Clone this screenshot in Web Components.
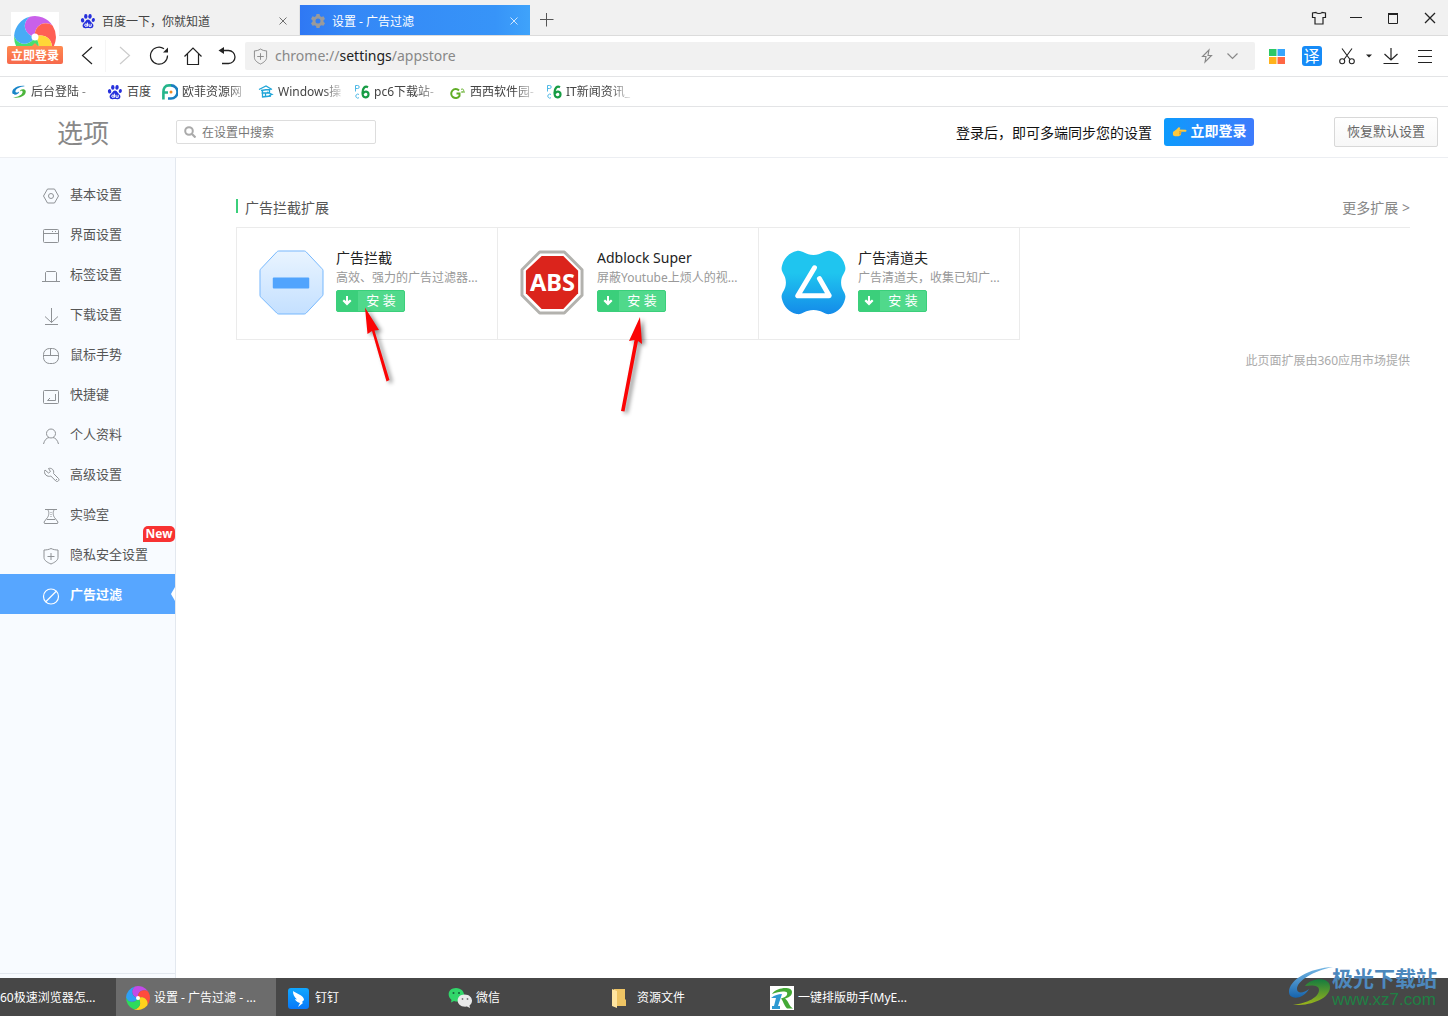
<!DOCTYPE html>
<html lang="zh-CN">
<head>
<meta charset="utf-8">
<title>设置 - 广告过滤</title>
<style>
html,body{margin:0;height:100%}
body{font-family:"Noto Sans","Noto Sans CJK SC",sans-serif;font-size:12px;color:#333;background:#fff}
</style>
</head>
<body>
<browser-window></browser-window>
<script>
const petal='M0 0C-6-1-8-8-3-11.6A12 12 0 0 1 10.1-6.4C5.1-10.1-.9-6 0 0Z';
const wheel=`<g transform="translate(12 12)"><path d="${petal}" fill="#c24be8"/><path d="${petal}" fill="#ff4a3d" transform="rotate(72)"/><path d="${petal}" fill="#ffd21c" transform="rotate(144)"/><path d="${petal}" fill="#2edb5c" transform="rotate(216)"/><path d="${petal}" fill="#2fa0f5" transform="rotate(288)"/><circle r="2" fill="#fff"/></g>`;
const paw='<g fill="#2630dc"><ellipse cx="2.6" cy="7.3" rx="1.7" ry="2.2" transform="rotate(-12 2.6 7.3)"/><ellipse cx="5.8" cy="3.4" rx="1.7" ry="2.3"/><ellipse cx="10" cy="3.4" rx="1.7" ry="2.3" transform="rotate(8 10 3.4)"/><ellipse cx="13.3" cy="7" rx="1.6" ry="2.1" transform="rotate(12 13.3 7)"/><path d="M8 6.6c1.5 0 2.2 1.3 3.3 2.6 1.2 1.2 2.4 2.2 2.1 3.9-.3 1.8-1.8 2.3-3.2 2.1-1.6-.2-2.8-.2-4.4 0-1.4.2-2.9-.4-3.2-2.2-.3-1.6 1-2.6 2.1-3.8C5.900 7.900 6.500 6.600 8 6.600z"/></g><g fill="none" stroke="#fff" stroke-width="1"><circle cx="5.900" cy="12.200" r="1.200"/><path d="M7.400 9.600v4M9 10.800v2.500h2.200v-2.500"/></g>';
const pc6='<g fill="none"><path d="M1.500 7.500V1.500H3.700a1.500 1.500 0 0 1 0 3H1.500M5 10.500a2 2 0 1 0 0 3.200" stroke="#4db8e6"/><path d="M14 3.200c-3-1.700-5.500 1-5.500 5.500 0 6.500 6 5.500 6 1.700 0-3.400-4.200-3.500-5.400-1" stroke="#179c44" stroke-width="2.200"/></g>';
const S=(vb,s,w=1)=>[vb,`<g fill="none" stroke="currentColor" stroke-width="${w}">${s}</g>`];
const ICONS={
 wheel:['0 0 24 24',wheel], paw:['0 0 16 16',paw], pc6:['0 0 16 16',pc6],
 gear:['0 0 16 16','<path fill="#999a9c" fill-rule="evenodd" d="M6.500 1h3l.5 2 1.500.9 2-.6 1.500 2.600L13.500 7.300v1.500l1.500 1.400-1.500 2.600-2-.6-1.500.9-.5 2h-3L6 13.100l-1.500-.9-2 .6L1 10.200l1.500-1.400V7.300L1 5.900l1.500-2.600 2 .6L6 3zM8 5.500a2.500 2.500 0 1 0 0 5 2.500 2.500 0 0 0 0-5z"/>'],
 x:S('0 0 8 8','<path d="M.5.5l7 7M7.500.5l-7 7"/>'),
 plus:S('0 0 14 14','<path d="M7 0v14M0 7h14" transform="translate(-.5 -.5)"/>'),
 shirt:S('0 0 16 16','<path d="M5 2.500c1 1.300 5 1.300 6 0L14.500 3v4.500H12v6.500H4V7.500H1.500V3z"/>',1.2),
 min:S('0 0 16 16','<path d="M2 7.500h12"/>'),
 max:S('0 0 16 16','<path d="M3.500 4v9.500h9V4z"/><path d="M3 4h10" stroke-width="2"/>'),
 close:S('0 0 16 16','<path d="M3 3l10 10M13 3L3 13"/>',1.3),
 back:S('0 0 20 20','<path d="M15 1L5.500 9.500 15 18"/>',1.2),
 fwd:S('0 0 20 20','<path d="M5 1l9.500 8.500L5 18"/>',1.2),
 reload:S('0 0 20 20','<path d="M18.500 9.500A8.500 8.500 0 1 1 15 2.800"/><path d="M19 1.500v5h-5z" fill="currentColor" stroke="none"/>',1.2),
 home:S('0 0 20 20','<path d="M1.500 10.500L10 2l8.500 8.500M4.500 8v10.500h11V8"/>',1.2),
 undo:S('0 0 20 20','<path d="M4 4.500h7.500a6.500 6.500 0 0 1 0 13H5"/><path d="M7 1v7L1.500 4.500z" fill="currentColor" stroke="none"/>',1.3),
 shield:S('0 0 16 18','<path d="M8 1c2 1.500 4.500 2 6.500 2v7c0 3-3 5.500-6.500 7-3.500-1.500-6.500-4-6.500-7V3c2 0 4.500-.5 6.500-2zM8 5.500v7M4.500 9h7"/>'),
 bolt:S('0 0 14 16','<path d="M9 2L2.500 8.500h3.500L5 14l6.500-6.500H8z"/>',1.1),
 chev:S('0 0 14 8','<path d="M2 1.500l5 5 5-5"/>',1.2),
 grid:['0 0 16 16','<path fill="#2bc866" d="M0 1h7.500v7H0z"/><path fill="#36a5fb" d="M8.500 1H16v7H8.500z"/><path fill="#ffb21b" d="M0 9h7.500v7H0z"/><path fill="#ff6744" d="M8.500 9H16v7H8.500z"/>'],
 cut:S('0 0 18 18','<path d="M4 1.500l8 11M14 1.500l-8 11"/><circle cx="4.200" cy="14.200" r="2.500"/><circle cx="13.800" cy="14.200" r="2.500"/>',1.1),
 caret:['0 0 6 4','<path d="M0 .5h6L3 3.500z" fill="#222"/>'],
 down:S('0 0 18 18','<path d="M9 1v11.500M2.500 7L9 13l6.500-6M1.500 16.500h15"/>',1.2),
 menu:S('0 0 16 16','<path d="M1 2.500h14M1 8.500h14M1 14.500h14"/>',1.1),
 swirl:['0 0 16 16','<path d="M14 2C5 1 0 6 1.500 9.500 3 12 9 10 8 7.500c-1 1.500-4 1.500-3.500-.5C5 4.500 9 3 14 2z" fill="#1785c8"/><path d="M2 13.500C11 15 16 10 14.500 6.500 13 4 8.500 5.500 9 7.500c1-1.500 3-1 2.500 1C11 11 7 13 2 13.500z" fill="#4bb53b"/>'],
 offi:['0 0 16 16','<g fill="none" stroke-width="2.600"><path d="M9 1.400A6.500 6.500 0 0 1 9 14.500H6" stroke="#1a7fc0"/><path d="M9 1.400H7C3 1.400 1.400 4 1.400 8v7.500M2 8.500h4" stroke="#25b58b"/></g><circle cx="9" cy="8" r="1.500" fill="#f28a22"/>'],
 win:['0 0 16 16','<g fill="none" stroke="#20a5d8" stroke-width="1.300"><path d="M1 5.500L8 2l6 3.500M3 6.500l10-1.500M3.500 9h8M4.500 6.500v7M4 13l9-1M11.500 5.500v4M7.500 9v4M9 8l5 2.500-3 1"/></g>'],
 gg:['0 0 16 16','<path d="M9 6.500A4.500 4.500 0 1 0 9.500 12V9.500H6.500" fill="none" stroke="#60ad26" stroke-width="2"/><path d="M11 5.500c2-1.500 4 1 1.500 2.500M11 8h4" fill="none" stroke="#60ad26"/>'],
 search:['0 0 12 12','<circle cx="5" cy="5" r="3.800" fill="none" stroke="#aaa" stroke-width="2"/><path d="M8 8l3.500 3.500" stroke="#aaa" stroke-width="2.200"/>'],
 n1:S('0 0 18 18','<path d="M5.500 2h7l4 7-4 7h-7l-4-7z"/><circle cx="9" cy="9" r="2.500"/>'),
 n2:S('0 0 18 18','<rect x="1.500" y="2.500" width="15" height="13" rx="1"/><path d="M1.500 6.500h15M10 4.500h1M13 4.500h1"/>'),
 n3:S('0 0 18 18','<path d="M0 14.500h18M3.500 14.500v-9l1-1h9l1 1v9"/>'),
 n4:S('0 0 18 18','<path d="M9.500 1v14.500M3 9.500l6.500 6 6.500-6M3 17.500h13"/>'),
 n5:S('0 0 18 18','<rect x="1.500" y="1.500" width="15" height="15" rx="6"/><path d="M1.500 8.500h15M8.500 1.500v7"/>'),
 n6:S('0 0 18 18','<rect x="1.500" y="3.500" width="15" height="13" rx="1"/><path d="M13.500 7v6.500H5.500M8 11l-2.500 2.500"/>'),
 n7:S('0 0 18 18','<circle cx="9" cy="6.500" r="4.500"/><path d="M1.500 17c1-4 3-6 5.500-6.500M16.500 17c-1-4-3-6-5.500-6.500"/>'),
 n8:S('0 0 18 18','<path d="M3 3l3.500 3 2-1.500L6.500 1.500c3-1 6 1.500 5 5l5 5c1.500 1.700-1 4-2.700 2.500l-5-5C5.500 10.500 1 7 3 3zM14 12.500h1"/>'),
 n9:S('0 0 18 18','<path d="M3 2.500h12M5.500 2.500c2 2 1.500 6 0 8L2 15l.5 1.500h13l.5-1.500-3.500-4.500c-1.500-2-2-6 0-8M5 12.500h8"/><path d="M9 5v6" stroke-dasharray="1 1"/>'),
 n10:S('0 0 18 18','<path d="M9 1.500c2 1 4.500 1.500 7 1.500v7.500c0 3-3.500 5-7 6.500-3.500-1.500-7-3.500-7-6.500V3c2.500 0 5-.5 7-1.500zM9 6v7M5.500 9.500h7"/>'),
 n11:S('0 0 18 18','<circle cx="9" cy="9.500" r="7.500"/><path d="M3.500 15l11-11"/>',1.2),
 dl:['0 0 10 10','<path d="M4 0h2v5l2-1.500 1.500 1.500L5 9.500.5 5 2 3.500 4 5z" fill="#fff"/>'],
 block:['0 0 66 66','<defs><linearGradient id="a" x2="0" y2="1"><stop stop-color="#e9f4ff"/><stop offset="1" stop-color="#c4e0ff"/></linearGradient></defs><path d="M20 1h26q1 0 2 1l16 17q1 1 1 2v24q0 1-1 2L48 64q-1 1-2 1H20q-1 0-2-1L2 48q-1-1-1-2V21q0-1 1-2L18 2q1-1 2-1z" fill="url(#a)" stroke="#75b7fd"/><rect x="14" y="28" width="37" height="11" rx="1" fill="#51a4fd"/>'],
 abs:['0 0 66 66','<path d="M20 2h25l18 18v26L45 64H20L2 46V20z" fill="#fff" stroke="#b3b2ae" stroke-width="3" stroke-linejoin="round"/><path d="M22 6h22l15 15v23L44 60H22L6 44V21z" fill="#db241c"/><text x="33" y="42" text-anchor="middle" font-family="Noto Sans" font-weight="700" font-size="24" fill="#fff">ABS</text>'],
 clean:['0 0 66 66','<defs><linearGradient id="b" x2="0" y2="1"><stop offset=".35" stop-color="#1fc5ef"/><stop offset="1" stop-color="#148be9"/></linearGradient></defs><path d="M16 1c6-1 8 4 17 4S44 0 50 1c8 2 13 7 15 15 2 7-4 8-4 17s6 10 4 17c-2 8-7 13-15 15-6 1-8-4-17-4s-11 5-17 4C8 63 3 58 1 50c-2-7 4-8 4-17s-6-10-4-17C3 8 8 3 16 1z" fill="url(#b)"/><path d="M34 18L17 46.500h32L39 29" fill="none" stroke="#fff" stroke-width="5" stroke-linecap="round" stroke-linejoin="round"/>'],
 ding:['0 0 24 24','<defs><linearGradient id="c" x2="0" y2="1"><stop stop-color="#10a7ff"/><stop offset="1" stop-color="#0878f8"/></linearGradient></defs><rect x="1" y="2" width="21" height="21" rx="3" fill="url(#c)"/><path d="M6 5c2 2 11 4 11 9l-2 2 1 1-5 4 2-4c-4-1-5-4-5-4l2 .5C7 10.500 6 8.500 6 5z" fill="#fff"/>'],
 wechat:['0 0 24 24','<path d="M8 2c10 0 11 13 2 13.500-2 0-3-.3-4-.6L3 16.500 3.500 14C-2 9 1 2 8 2z" fill="#31d66a"/><circle cx="5.500" cy="7" r="1" fill="#16603a"/><circle cx="11" cy="7" r="1" fill="#16603a"/><path d="M16.500 8.500c8 0 9.500 8 5 11l.5 2.500-3-1.400C7 22 7 8.500 16.500 8.500z" fill="#e9eaea"/><circle cx="14.500" cy="13" r=".9" fill="#777"/><circle cx="19.500" cy="13" r=".9" fill="#777"/>'],
 folder:['0 0 24 24','<path d="M5 3h11v10l1 1v6H5z" fill="#eec464"/><path d="M3 3l5 2v17l-5-2z" fill="#ffe5a0"/>'],
 rr:['0 0 24 24','<path d="M0 0h24v24H0z" fill="#fff"/><path d="M2 8C7 1 22 0 22 6c0 4-4 6-7 6.500 4 3 4 8 8 10h-6c-3-3-4-8-6-10 4-1 7-3 6-6-2-2-9-1-15 1.500z" fill="#44a936"/><path d="M1 12c4-3 7-4 11-4L8 20h2v3H2v-3h2l2-8z" fill="#2e9ad2"/>'],
 aurora:['0 0 46 42','<defs><linearGradient id="d" x2="0" y2="1"><stop stop-color="#75b8e5"/><stop offset="1" stop-color="#1664ad"/></linearGradient><linearGradient id="e" x2="0" y2="1"><stop stop-color="#167c3f"/><stop offset="1" stop-color="#9db51b"/></linearGradient></defs><path d="M45 1C21 2 1 14 1 26c0 8 14 8 20-3-5 4-12 5-12 0C9 15 25 5 45 1z" fill="url(#d)"/><path d="M17 20c7-9 25-9 25 1C42 33 22 40 5 39c15-2 26-8 26-15 0-5-7-5-14-4z" fill="url(#e)"/>'],
 hand:['0 0 16 12','<path d="M1 7l4-3 2-2 2 .5-1 2 6.500.2c1.300.1 1.300 2 0 2.100H10l-.5 3.500L7 11.500H3L1 10.500z" fill="#ffc83d"/><path d="M7.500 7h2.500M7.500 9h2" stroke="#d98a1c"/>']
};
const BASE='*{box-sizing:border-box}button{font:inherit;color:inherit;border:0;background:none;padding:0;margin:0;display:flex;align-items:center;justify-content:center;white-space:nowrap}a{color:inherit;text-decoration:none}';
function define(name,css,html){
  customElements.define(name,class extends HTMLElement{
    connectedCallback(){
      if(this.shadowRoot)return;
      const t=document.createElement('template');
      t.innerHTML=`<style>${BASE}${css}</style>${typeof html==='function'?html(this):html}`;
      this.attachShadow({mode:'open'}).append(t.content.cloneNode(true));
    }
  });
}
define('ui-icon',':host{display:inline-flex;flex:none}svg{display:block}',e=>{
  const [vb,s]=ICONS[e.getAttribute('name')],w=e.getAttribute('w')||16,h=e.getAttribute('h')||w;
  return `<svg width="${w}" height="${h}" viewBox="${vb}" aria-hidden="true">${s}</svg>`;
});
define('tool-button',':host{display:flex;flex:none;width:34px;height:34px;color:#222}button{width:100%;height:100%}',
  e=>`<button aria-label="${e.getAttribute('label')}"><slot></slot></button>`);

define('browser-tab',`:host{display:flex;align-items:center;height:30px;padding:2px 12px 0 10px;color:#444;border-right:1px solid #e3e3e3}
 :host([active]){background:linear-gradient(90deg,#2f78f4,#3487f6 20%,#3794f8 85%,#3fa3fb);color:#fff;border:0}
 span{flex:1;padding-left:6px;white-space:nowrap}button{width:8px;height:8px;opacity:.75}`,
 `<slot name="icon"></slot><span><slot></slot></span><button aria-label="关闭标签"><ui-icon name="x" w="8"></ui-icon></button>`);

define('title-bar',`:host{display:flex;align-items:flex-end;height:36px;background:#f1f1f1;border-bottom:1px solid #dcdcdc;padding-left:70px}
 .a{width:230px}.b{width:230px}.plus{width:34px;height:30px;color:#555}.win{display:flex;margin-left:auto;align-self:stretch}.win tool-button{width:37px;height:36px}`,
 `<browser-tab class="a"><ui-icon slot="icon" name="paw"></ui-icon>百度一下，你就知道</browser-tab><browser-tab class="b" active><ui-icon slot="icon" name="gear"></ui-icon>设置 - 广告过滤</browser-tab>
 <tool-button class="plus" label="新建标签"><ui-icon name="plus" w="14"></ui-icon></tool-button>
 <div class="win">${[['shirt','皮肤'],['min','最小化'],['max','最大化'],['close','关闭']].map(i=>`<tool-button label="${i[1]}"><ui-icon name="${i[0]}"></ui-icon></tool-button>`).join('')}</div>`);

define('login-badge',`:host{display:block;position:absolute;left:7px;top:12px;width:56px}
 button{display:block;width:56px;position:relative}.pic{display:block;width:48px;height:34px;margin:0 auto;padding:4px 3px 0;background:#fff;overflow:hidden;text-align:left}.pic ui-icon{opacity:.88}
 .tag{display:block;height:18px;line-height:19px;border-radius:2px;background:linear-gradient(#ff8a4f,#f7694c);color:#fff;font-weight:700}
 .tag::before{content:"";position:absolute;left:25px;top:31px;border:3px solid transparent;border-top:0;border-bottom-color:#ff8a4f}`,
 '<button><span class="pic"><ui-icon name="wheel" w="42"></ui-icon></span><span class="tag">立即登录</span></button>');

define('address-bar',`:host{display:flex;flex:1;align-items:center;height:28px;margin:0 4px 0 1px;padding:0 15px 0 8px;background:#f1f1f1;border-radius:2px;color:#888;min-width:0}
 .url{flex:1;font-size:14px;line-height:28px;padding-left:7px;outline:0;white-space:nowrap}b{font-weight:400;color:#222}.c{margin-left:10px}`,
 '<ui-icon name="shield" w="15" h="17"></ui-icon><div class="url" role="textbox" aria-label="地址" contenteditable="true" spellcheck="false">chrome://<b>settings</b>/appstore</div><ui-icon name="bolt" w="16" h="16"></ui-icon><ui-icon class="c" name="chev" w="15" h="8"></ui-icon>');

define('nav-toolbar',`:host{display:flex;align-items:center;height:41px;border-bottom:1px solid #e3e4e6;padding:0 6px 0 70px}
 .sep{width:1px;height:32px;margin:0 1px;background:#f5f5f5}.off{width:35px;color:#ccc}.r{width:35px}
 .tr{width:20px;height:20px;border-radius:3px;background:#168bf7;color:#fff;font-size:16px;line-height:20px}.car{width:10px}`,
 `<tool-button label="后退"><ui-icon name="back" w="20"></ui-icon></tool-button><div class="sep"></div><tool-button class="off" label="前进"><ui-icon name="fwd" w="20"></ui-icon></tool-button><tool-button label="刷新"><ui-icon name="reload" w="20"></ui-icon></tool-button><tool-button label="主页"><ui-icon name="home" w="20"></ui-icon></tool-button><tool-button label="撤销"><ui-icon name="undo" w="20"></ui-icon></tool-button>
 <address-bar></address-bar>
 <tool-button class="r" label="应用"><ui-icon name="grid"></ui-icon></tool-button><tool-button class="r" label="翻译"><div class="tr">译</div></tool-button><tool-button class="r" label="截图"><ui-icon name="cut" w="18"></ui-icon></tool-button><tool-button class="car" label="更多截图"><ui-icon name="caret" w="6" h="4"></ui-icon></tool-button><tool-button label="下载"><ui-icon name="down" w="18"></ui-icon></tool-button><tool-button label="菜单"><ui-icon name="menu"></ui-icon></tool-button>`);

define('bookmark-link',`:host{display:flex;margin-right:11px}a{display:flex;align-items:center;gap:4px;color:#444}
 span{white-space:nowrap;overflow:hidden;line-height:20px}:host([long]) span{width:65px;-webkit-mask-image:linear-gradient(90deg,#000 44px,transparent 68px);mask-image:linear-gradient(90deg,#000 44px,transparent 68px)}`,
 e=>`<a href="#"><ui-icon name="${e.getAttribute('icon')}"></ui-icon><span><slot></slot></span></a>`);
define('bookmark-bar',':host{display:flex;align-items:center;height:30px;padding-left:11px;border-bottom:1px solid #e3e4e6}',
 [['swirl','后台登陆 -',1],['paw','百度'],['offi','欧菲资源网',1],['win','Windows操',1],['pc6','pc6下载站-',1],['gg','西西软件园-',1],['pc6','IT新闻资讯_',1]].map(b=>`<bookmark-link icon="${b[0]}"${b[2]?' long':''}>${b[1]}</bookmark-link>`).join(''));

define('options-header',`:host{display:flex;align-items:center;height:51px;border-bottom:1px solid #eceef2;padding-right:10px}
 h1{margin:0;width:176px;padding:2px 0 0 57px;font-size:26px;font-weight:400;line-height:40px;color:#888}
 label{display:flex;align-items:center;width:200px;height:24px;border:1px solid #ddd;border-radius:2px;padding-left:7px}
 input{flex:1;min-width:0;border:0;outline:0;padding:0 6px;font:inherit;color:#666;background:none}input::placeholder{color:#777}
 p{margin:0 12px 0 auto;font-size:14px;color:#111}
 .login,.reset{line-height:20px;padding-bottom:2px}
 .login{width:90px;height:28px;border-radius:3px;background:linear-gradient(90deg,#0d9bfd,#3e7bfc);color:#fff;font-size:14px;font-weight:700;gap:4px}
 .reset{width:104px;height:30px;margin-left:80px;border:1px solid #d8d8d8;border-radius:2px;background:linear-gradient(#fff,#f7f7f7);font-size:13px;color:#666}`,
 '<h1>选项</h1><label><ui-icon name="search" w="12"></ui-icon><input type="text" aria-label="在设置中搜索" placeholder="在设置中搜索"></label><p>登录后，即可多端同步您的设置</p><button class="login"><ui-icon name="hand" w="15" h="12"></ui-icon>立即登录</button><button class="reset">恢复默认设置</button>');

define('nav-item',`:host{display:block;position:relative}a{display:flex;align-items:center;gap:10px;height:40px;padding-left:42px;font-size:13px;line-height:20px;color:#555}
 ui-icon{color:#8f9296;margin-top:3px}:host([active]) a{background:#57a6ff;color:#fff;font-weight:700}:host([active]) ui-icon{color:#fff}
 :host([active]) a::after{content:"";position:absolute;right:0;top:13px;border:7px solid transparent;border-left:0;border-right:4px solid #fff}
 i{position:absolute;right:0;top:-8px;width:32px;height:16px;line-height:16px;text-align:center;border-radius:5px 5px 5px 0;background:#f83232;color:#fff;font-style:normal;font-weight:700;font-size:12px}`,
 e=>`<a href="#"><ui-icon name="${e.getAttribute('icon')}" w="18"></ui-icon><span><slot></slot></span></a>${e.hasAttribute('fresh')?'<i>New</i>':''}`);
define('side-nav',`:host{display:flex;flex-direction:column;width:176px;flex:none;background:#f8fbff;border-right:1px solid #e3e8ef}nav{padding-top:16px}footer{height:5px;margin-top:auto;border-top:1px solid #e3e8ef}`,
 `<nav>${['基本设置','界面设置','标签设置','下载设置','鼠标手势','快捷键','个人资料','高级设置','实验室','隐私安全设置','广告过滤'].map((t,i)=>`<nav-item icon="n${i+1}"${i==9?' fresh':''}${i==10?' active':''}>${t}</nav-item>`).join('')}</nav><footer></footer>`);

define('extension-card',`:host{display:flex;width:261px;height:111px;padding:20px 0 0 22px;gap:12px;border-right:1px solid #ebebeb}ui-icon{margin-top:2px}
 .t{min-width:0}h3{margin:0;font-size:14px;line-height:20px;font-weight:400;color:#222}p{margin:0 0 2px;line-height:20px;color:#999;white-space:nowrap}
 button{width:69px;height:22px;border:1px solid #3bcf7b;border-radius:2px;background:#50d98b;color:#fff;font-size:13px;overflow:hidden}
 .d{display:flex;align-items:center;justify-content:center;width:21px;height:20px;background:#3bcf7b}.d ui-icon{margin:0 1px 0 0}.l{flex:1;line-height:18px;padding-bottom:2px}`,
 e=>`<ui-icon name="${e.getAttribute('icon')}" w="65"></ui-icon><div class="t"><h3>${e.getAttribute('name')}</h3><p><slot></slot></p><button><span class="d"><ui-icon name="dl" w="10"></ui-icon></span><span class="l">安 装</span></button></div>`);

define('extension-list',`:host{display:block;flex:1;min-width:0;padding:40px 38px 0 60px}
 header{display:flex;justify-content:space-between;height:29px;font-size:14px;line-height:20px;color:#555}h2{display:flex;gap:7px;margin:0;font:inherit}h2::before{content:"";width:2px;height:14px;margin-top:1px;background:#3bcf7b}
 header a{color:#888}.line{border-top:1px solid #ebebeb}.cards{display:flex;width:fit-content;border:1px solid #ebebeb;border-width:0 0 1px 1px}.note{margin:11px 0 0;text-align:right;line-height:20px;color:#aaa}`,
 '<header><h2>广告拦截扩展</h2><a href="#">更多扩展 &gt;</a></header><div class="line"><div class="cards"><extension-card icon="block" name="广告拦截">高效、强力的广告过滤器...</extension-card><extension-card icon="abs" name="Adblock Super">屏蔽Youtube上烦人的视...</extension-card><extension-card icon="clean" name="广告清道夫">广告清道夫，收集已知广...</extension-card></div></div><p class="note">此页面扩展由360应用市场提供</p>');

define('task-item',`:host{display:block;flex:none;width:160px}button{width:100%;height:38px;justify-content:flex-start;gap:4px;padding-left:10px;color:#fff}
 ui-icon{margin-top:2px}:host([active]) button{background:#6c6c6c}:host([plain]){width:115px;overflow:hidden}:host([plain]) button{padding-left:0}`,
 e=>`<button>${e.getAttribute('icon')?`<ui-icon name="${e.getAttribute('icon')}" w="24"></ui-icon>`:''}<span><slot></slot></span></button>`);
define('task-bar',':host{display:flex;gap:1px;height:38px;background:#474747}',
 '<task-item plain>60极速浏览器怎...</task-item><task-item icon="wheel" active>设置 - 广告过滤 - ...</task-item><task-item icon="ding">钉钉</task-item><task-item icon="wechat">微信</task-item><task-item icon="folder">资源文件</task-item><task-item icon="rr">一键排版助手(MyE...</task-item>');

define('site-mark',`:host{display:flex;position:absolute;right:11px;bottom:6px;pointer-events:none}
 b{display:block;font-size:21px;line-height:24px;color:#4d88bd}span{display:block;font:17px/20px "Liberation Sans",sans-serif;color:#1f8044}.t{margin-left:-2px}`,
 '<ui-icon name="aurora" w="46" h="42"></ui-icon><div class="t"><b>极光下载站</b><span>www.xz7.com</span></div>');
define('pointer-arrows',':host{position:absolute;left:350px;top:300px;pointer-events:none}svg{display:block;filter:drop-shadow(3px 2px 2px rgba(0,0,0,.45))}',
 '<svg width="310" height="125" aria-hidden="true"><g fill="#fb0404"><path d="M15 7.500L29 30l-4.500.5L39.500 80l-3 1.500L22 31l-4.500 3z"/><path d="M290 17l2 27-4-3L274.500 111.500l-3.500-.5L284.500 40l-5.500 1z"/></g></svg>');

define('browser-window',`:host{display:flex;flex-direction:column;min-height:100vh;position:relative}main{display:flex;flex:1}`,
 '<title-bar></title-bar><nav-toolbar></nav-toolbar><bookmark-bar></bookmark-bar><options-header></options-header><main><side-nav></side-nav><extension-list></extension-list></main><task-bar></task-bar><login-badge></login-badge><pointer-arrows></pointer-arrows><site-mark></site-mark>');
</script>
</body>
</html>
